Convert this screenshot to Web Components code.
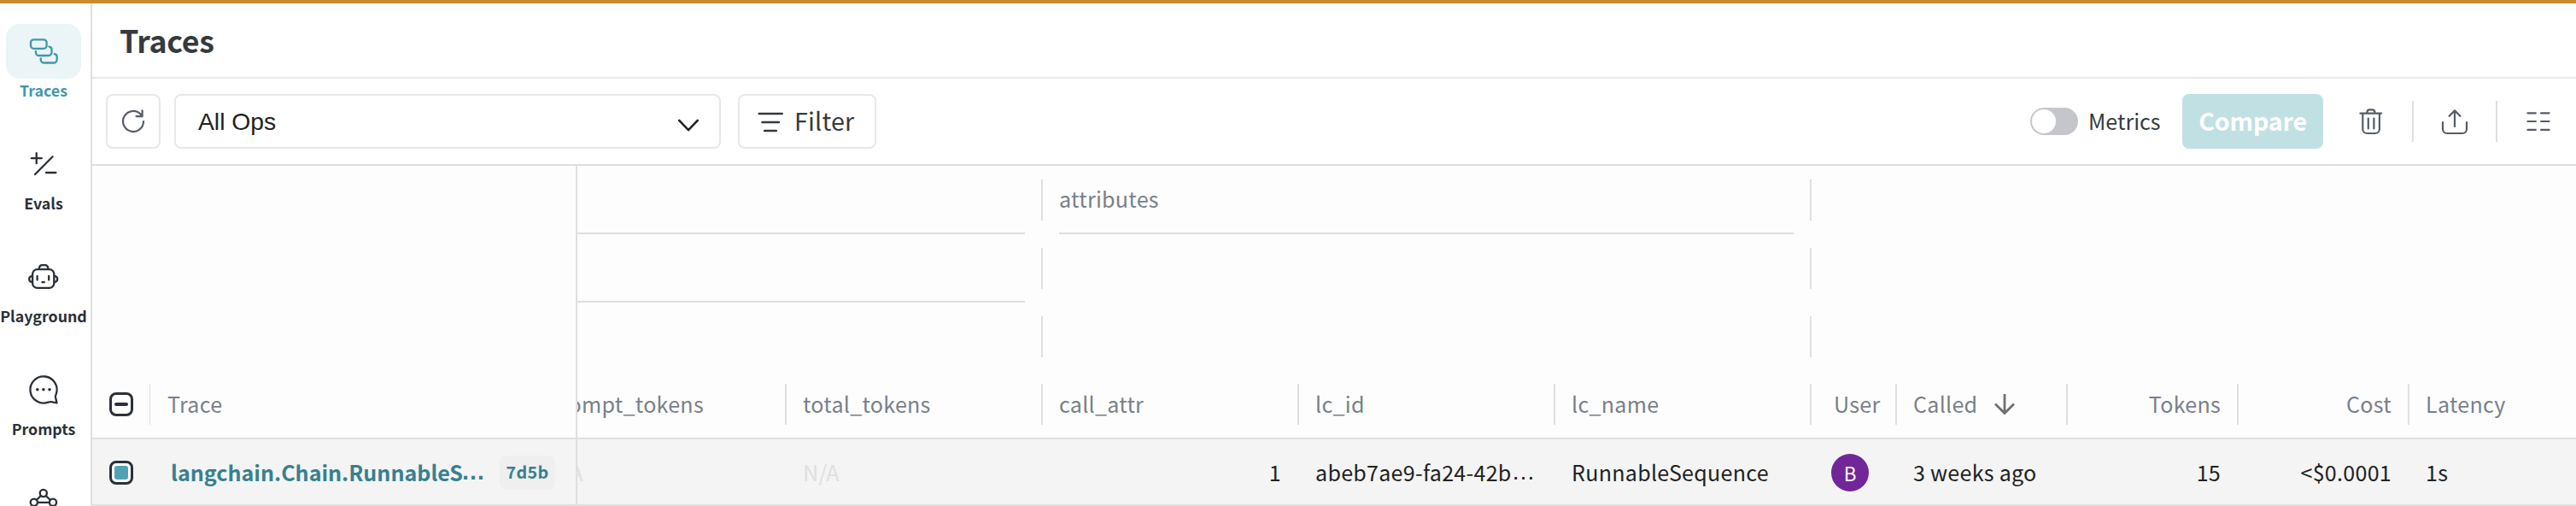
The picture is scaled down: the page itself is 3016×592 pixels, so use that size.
<!DOCTYPE html>
<html lang="en">
<head>
<meta charset="utf-8">
<title>Traces</title>
<style>
html,body{margin:0;height:100%;overflow:hidden;background:#fff}
body{font-family:"Noto Sans CJK SC","Noto Sans",sans-serif;color:#363a3d}
</style>
</head>
<body>
<app-shell></app-shell>
<script>
const define = (name, html, setup) => customElements.define(name, class extends HTMLElement {
  constructor() {
    super();
    const t = document.createElement('template');
    t.innerHTML = html;
    this.attachShadow({mode: 'open'}).append(t.content.cloneNode(true));
  }
  connectedCallback() { if (setup) setup(this, this.shadowRoot); }
});

const ICONS = {
  traces: '<rect x="5" y="6.3" width="18.6" height="10.5" rx="3.4"/><path d="M10.8 20v1a4 4 0 0 0 4 4h10.7a4 4 0 0 0 4-4v-3q0-3-3-3.3M16.7 28.3v1.2a4 4 0 0 0 4 4h11a4 4 0 0 0 4-4v-3q0-3-3-3.3"/>',
  evals: '<path d="M5.8 13.2h12M11.7 7.2v12M30.6 11.2L10 32M23 30h11.4"/>',
  playground: '<rect x="7.1" y="11.1" width="25.2" height="21.8" rx="5.5"/><path d="M14.8 10.8c0-3 1.6-4.7 4-4.7h2.6c2.4 0 4 1.7 4 4.7M6.8 18.9c-2.5.2-3.6 1.7-3.6 3.6s1.1 3.4 3.6 3.6M32.6 18.9c2.5.2 3.6 1.7 3.6 3.6s-1.1 3.4-3.6 3.6M12.6 18.8v4.7M26.2 18.8v4.7M18.4 26.2h2.4"/>',
  prompts: '<path d="M34.6 25.5A15.6 15.6 0 1 0 25.5 34.6Q27.4 33.9 29 34.2L35.6 35.4L33.9 28.5Q33.7 27.2 34.6 25.5Z"/><g fill="currentColor" stroke="none"><circle cx="12.8" cy="19.8" r="1.8"/><circle cx="19.9" cy="19.8" r="1.8"/><circle cx="27" cy="19.8" r="1.8"/></g>',
  models: '<circle cx="19.8" cy="9" r="4.1"/><circle cx="8.8" cy="19.8" r="4.1"/><circle cx="31" cy="19.8" r="4.1"/><path d="M16.8 12l-5 5M22.8 12l5 5M13 19.8h14"/>',
  refresh: '<path d="M32 20.2A12 12 0 1 1 28.5 11.5L30.4 13.8M30.6 7.3V14.1H23.5"/>',
  filter: '<path d="M6.7 11h27M10.5 21h19.3M13.2 31h13.6"/>',
  chevron: '<path d="M9.2 18.9L20 30.2L30.8 18.9"/>',
  trash: '<path d="M7.4 10.6h24.8M15.3 10.3c0-2.8 1.3-4 3-4h3.2c1.7 0 3 1.2 3 4M10.3 10.6V29a5 5 0 0 0 5 5h9.6a5 5 0 0 0 5-5V10.6M16.8 16.6v11.8M23.4 16.6v11.8"/>',
  upload: '<path d="M6 21.2V29a5 5 0 0 0 5 5h18a5 5 0 0 0 5-5v-7.8M20 8v18M13.6 13.8L20 7.4l6.4 6.4"/>',
  columns: '<path d="M7.4 10.3h9.4M23 10.3h9.6M7.4 20h9.4M23 20h9.6M7.4 29.8h9.4M23 29.8h9.6"/>',
  down: '<path stroke-linecap="butt" stroke-linejoin="miter" d="M20 8v22M9 19.4l11 11l11-11"/>'
};

define('ui-icon', `<style>
:host{display:block;width:40px;height:40px;flex:none}
svg{display:block;width:100%;height:100%;fill:none;stroke:currentColor;stroke-width:var(--stroke,2.2);stroke-linecap:round;stroke-linejoin:round}
</style><svg viewBox="0 0 40 40"></svg>`,
(el, root) => { root.querySelector('svg').innerHTML = ICONS[el.getAttribute('name')]; });

define('nav-item', `<style>
:host{display:flex;flex-direction:column;align-items:center;height:132px;flex:none;color:#2b3038}
.tile{display:flex;align-items:center;justify-content:center;width:88px;height:64px;border-radius:16px;flex:none}
.label{font-size:17.8px;font-weight:700;line-height:27px;white-space:nowrap}
:host([active]){color:#3f98ab}
:host([active]) .tile{background:#ebf4f6}
</style><div class="tile"><slot name="icon"></slot></div><div class="label"><slot></slot></div>`);

define('nav-rail', `<style>
:host{display:flex;flex-direction:column;width:102px;flex:none;padding:24px 4px 0 0;border-right:2px solid #dfdfdf;background:#fff;overflow:hidden}
ui-icon{--stroke:2.3}
</style>
<nav-item active><ui-icon slot="icon" name="traces"></ui-icon>Traces</nav-item>
<nav-item><ui-icon slot="icon" name="evals"></ui-icon>Evals</nav-item>
<nav-item><ui-icon slot="icon" name="playground"></ui-icon>Playground</nav-item>
<nav-item><ui-icon slot="icon" name="prompts"></ui-icon>Prompts</nav-item>
<nav-item><ui-icon slot="icon" name="models"></ui-icon></nav-item>`);

define('page-header', `<style>
:host{display:flex;align-items:center;height:83px;flex:none;padding:0 0 3px 32px;border-bottom:2px solid #e8e8e8}
h1{margin:0;font-size:35.8px;line-height:48px;font-weight:700;letter-spacing:-.3px;color:#363a3d}
</style><h1><slot></slot></h1>`);

define('outline-box', `<style>
:host{display:flex;align-items:center;box-sizing:border-box;height:64px;border:2px solid #e8e8e8;border-radius:8px;background:#fff;flex:none}
</style><slot></slot>`);

define('toggle-switch', `<style>
:host{display:flex;align-items:center;gap:12px;width:154px;font-size:25.07px;line-height:36px;color:#363a3d}
.track{box-sizing:border-box;width:56px;height:32px;border-radius:16px;background:#c5c6cc;padding:2px;flex:none}
.knob{width:28px;height:28px;border-radius:50%;background:#fff}
.name{padding-bottom:2px}
</style><div class="track"><div class="knob"></div></div><div class="name"><slot></slot></div>`);

define('tool-bar', `<style>
:host{display:flex;align-items:center;height:100px;flex:none;padding:0 24px 0 16px;border-bottom:2px solid #dfdfdf;color:#565c66}
ui-icon{--stroke:2.2}
.refresh{width:64px;justify-content:center;margin-right:16px}
.select{width:640px;padding:0 16px 0 26px;justify-content:space-between;margin-right:20px;color:#222;font:28.3px/40px "Liberation Sans",sans-serif}
.select ui-icon{width:40px;height:40px;--stroke:2.6}
.filter{width:162px;padding-left:16px;gap:8px;color:#363a3d;font-size:28.65px;line-height:40px;letter-spacing:.2px}
.filter span{padding-bottom:3px}
.filter ui-icon{--stroke:2.6}
.spacer{flex:1}
.compare{display:flex;align-items:center;justify-content:center;box-sizing:border-box;width:165px;height:64px;padding-bottom:3px;border-radius:8px;background:#c1e0e4;color:#fff;font-size:28.65px;line-height:40px;font-weight:700;letter-spacing:-.2px;margin:0 36px 0 24px}
.rule{width:2px;height:48px;background:#dfdfdf;margin:0 28px}
</style>
<outline-box class="refresh"><ui-icon name="refresh"></ui-icon></outline-box>
<outline-box class="select"><span>All Ops</span><ui-icon name="chevron"></ui-icon></outline-box>
<outline-box class="filter"><ui-icon name="filter"></ui-icon><span>Filter</span></outline-box>
<div class="spacer"></div>
<toggle-switch>Metrics</toggle-switch>
<div class="compare">Compare</div>
<ui-icon name="trash"></ui-icon><div class="rule"></div>
<ui-icon name="upload"></ui-icon><div class="rule"></div>
<ui-icon name="columns"></ui-icon>`);

define('check-box', `<style>
:host{display:flex;align-items:center;justify-content:center;box-sizing:border-box;width:28px;height:28px;border:3px solid #2b3038;border-radius:8px;flex:none;background:#fff}
i{display:block;width:16px;height:4px;border-radius:2px;background:#2b3038}
:host([checked]) i{height:16px;border-radius:3px;background:#4fa3b5}
</style><i></i>`);

define('head-cell', `<style>
:host{display:flex;align-items:center;box-sizing:border-box;flex:none;height:100%;padding-left:19px}
.text{display:flex;align-items:center;flex:1;min-width:0;padding:0 var(--end,19px) var(--lift,2px) 0;white-space:nowrap}
:host([end]) .text{justify-content:flex-end}
.sep{width:2px;height:48px;background:#dfdfdf;flex:none}
:host([thin]) .sep{width:1px}
:host([bare]) .sep{display:none}
</style><div class="text"><slot></slot></div><div class="sep"></div>`);

define('group-cell', `<style>
:host{display:flex;align-items:center;box-sizing:border-box;flex:none;height:100%}
.band{display:flex;align-items:center;box-sizing:border-box;flex:1;height:100%;margin:0 19px;border-bottom:2px solid transparent;padding-bottom:2px}
:host([lined]) .band{border-color:#dfdfdf}
.sep{width:2px;height:48px;background:#dfdfdf;flex:none}
</style><div class="band"><slot></slot></div><div class="sep"></div>`);

define('data-cell', `<style>
:host{display:flex;align-items:center;box-sizing:border-box;flex:none;height:100%;padding:0 21px 0 19px;white-space:nowrap;color:#222}
:host([end]){justify-content:flex-end}
:host([muted]){color:#dfe0e0}
</style><slot></slot>`);

define('user-avatar', `<style>
:host{display:flex;align-items:center;justify-content:center;width:44px;height:44px;flex:none;margin-top:2px;border-radius:50%;background:#71269a;color:#fff;font-size:22.4px;line-height:42px;letter-spacing:0}
div{padding-bottom:1px}
</style><div><slot></slot></div>`);

define('id-badge', `<style>
:host{display:flex;align-items:center;justify-content:center;box-sizing:border-box;width:65px;height:40px;margin-top:2px;padding-bottom:2px;border-radius:8px;background:#efefef;color:#38808f;font-size:19.7px;line-height:28px;font-weight:700;letter-spacing:.3px;flex:none}
</style><slot></slot>`);

define('pinned-pane', `<style>
:host{display:flex;flex-direction:column;width:568px;flex:none;font-size:25.07px;line-height:36px}
.head,.row{display:flex;box-sizing:border-box;border-right:2px solid #dfdfdf}
.head{height:318px;align-items:flex-end;color:#79808a;letter-spacing:.27px}
.head>*{height:78px}
.select{width:68px;--lift:0;--end:0}
.select check-box{margin-left:1px}
.title{margin-left:1px}
.line{height:2px;background:#dfdfdf;flex:none}
.row{height:76px;align-items:center;background:#f4f4f4;padding-left:20px}
.row check-box{margin-top:2px}
.link{display:flex;width:385px;margin-left:44px;color:#38808f;font-weight:700;white-space:nowrap}
.dots{font:700 28px/36px "Liberation Sans",sans-serif;margin-left:-2px}
</style>
<div class="head"><head-cell class="select" thin><check-box></check-box></head-cell><head-cell bare><span class="title">Trace</span></head-cell></div>
<div class="line"></div>
<div class="row"><check-box checked></check-box><div class="link"><span>langchain.Chain.RunnableS</span><span class="dots">…</span></div><id-badge>7d5b</id-badge></div>
<div class="line"></div>`);

define('scroll-pane', `<style>
:host{display:block;flex:1;min-width:0;overflow:hidden;font-size:25.07px;line-height:36px;letter-spacing:.27px}
.track{margin-left:-55px}
.tier{display:flex;height:80px;color:#79808a}
.tier.last{height:78px}
.line{height:2px;background:#dfdfdf}
.row{display:flex;height:76px;background:#f4f4f4}
.w6{width:600px}.w9{width:900px}.w3{width:300px}.w2{width:200px}.w1{width:100px}
.user{padding-left:26px;--end:0}
.avatar{padding-left:23px}
.rest{width:195px}
.dots{font:28px/36px "Liberation Sans",sans-serif}
ui-icon{margin:2px 0 0 12px;color:#707070;--stroke:2.8}
</style>
<div class="track">
<div class="tier"><group-cell class="w6" lined></group-cell><group-cell class="w9" lined>attributes</group-cell></div>
<div class="tier"><group-cell class="w6" lined></group-cell><group-cell class="w9"></group-cell></div>
<div class="tier"><group-cell class="w6"></group-cell><group-cell class="w9"></group-cell></div>
<div class="tier last">
<head-cell class="w3">prompt_tokens</head-cell><head-cell class="w3">total_tokens</head-cell><head-cell class="w3">call_attr</head-cell><head-cell class="w3">lc_id</head-cell><head-cell class="w3">lc_name</head-cell><head-cell class="w1 user">User</head-cell><head-cell class="w2">Called<ui-icon name="down"></ui-icon></head-cell><head-cell class="w2" end>Tokens</head-cell><head-cell class="w2" end>Cost</head-cell><head-cell class="rest" bare>Latency</head-cell>
</div>
<div class="line"></div>
<div class="row">
<data-cell class="w3" muted>N/A</data-cell><data-cell class="w3" muted>N/A</data-cell><data-cell class="w3" end>1</data-cell><data-cell class="w3"><span>abeb7ae9-fa24-42b</span><span class="dots">…</span></data-cell><data-cell class="w3">RunnableSequence</data-cell><data-cell class="w1 avatar"><user-avatar>B</user-avatar></data-cell><data-cell class="w2">3 weeks ago</data-cell><data-cell class="w2" end>15</data-cell><data-cell class="w2" end>&lt;$0.0001</data-cell><data-cell class="rest">1s</data-cell>
</div>
<div class="line"></div>
</div>`);

define('trace-grid', `<style>:host{display:flex;flex:1;min-height:0;background:#fdfdfd}</style><pinned-pane></pinned-pane><scroll-pane></scroll-pane>`);

define('app-shell', `<style>
:host{display:flex;box-sizing:border-box;height:100vh;border-top:4px solid #c98b2f;overflow:hidden}
main{display:flex;flex-direction:column;flex:1;min-width:0}
</style>
<nav-rail></nav-rail>
<main><page-header>Traces</page-header><tool-bar></tool-bar><trace-grid></trace-grid></main>`);
</script>
</body>
</html>
